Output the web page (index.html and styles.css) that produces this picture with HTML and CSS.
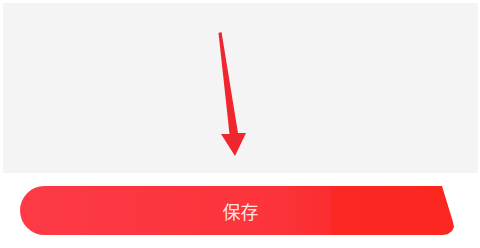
FILE: index.html
```html
<!DOCTYPE html>
<html lang="zh-CN">

<head>
    <meta charset="UTF-8">
    <meta name="viewport" content="width=device-width, initial-scale=1.0">
    <title>保存</title>
    <link rel="stylesheet" href="styles.css">
</head>

<body>
    <div class="panel">
        <svg class="arrow" viewBox="3 3 475 170" width="475" height="170">
            <polygon points="218.5,33 221.5,32 238,133 246,133 235,156 221,134 229.5,134" fill="#ef262d" />
        </svg>
    </div>
    <div class="footer">
        <button class="btn-save">保存</button>
    </div>
</body>

</html>
```

FILE: styles.css
```css
html,
body {
    margin: 0;
    padding: 0;
    background-color: #fff;
    font-family: "Noto Sans CJK SC", "Noto Sans", sans-serif;
}

.panel {
    margin: 3px 2px 0 3px;
    height: 170px;
    background-color: #f4f4f4;
}

.arrow {
    display: block;
}

.footer {
    padding: 13px 0 0 20px;
}

.btn-save {
    display: flex;
    align-items: center;
    justify-content: center;
    width: 435px;
    height: 49px;
    padding: 0 0 0 6px;
    border: 0;
    border-radius: 25px 0 0 25px;
    background: linear-gradient(90deg, #fd3a46 0%, #fc333a 60%, #fb2d30 71%, #fb2823 72%, #fb2620 100%);
    clip-path: polygon(0 0, 422px 0, 433px 36px, 434px 41px, 432px 45px, 428px 48px, 423px 49px, 0 49px);
    color: rgba(255, 255, 255, 0.88);
    font-family: "Noto Sans CJK SC", sans-serif;
    font-size: 18px;
    letter-spacing: 0;
    cursor: pointer;
}
```
